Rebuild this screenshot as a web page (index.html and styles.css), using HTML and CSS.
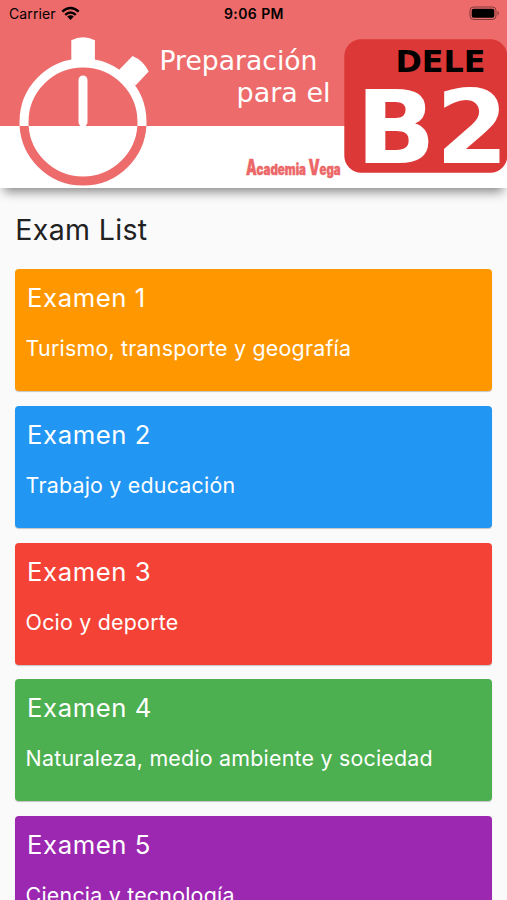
FILE: index.html
```html
<!DOCTYPE html>
<html lang="es">
<head>
<meta charset="utf-8">
<meta name="viewport" content="width=device-width, initial-scale=1">
<title>Preparación para el DELE B2</title>
<link rel="stylesheet" href="styles.css">
</head>
<body>
<header class="banner">
  <svg class="banner-art" viewBox="0 0 507 187" width="507" height="187">
    <rect width="507" height="126" fill="#ed6b6b"/>
    <clipPath id="upper"><rect width="507" height="126"/></clipPath>
    <clipPath id="lower"><rect y="126" width="507" height="61"/></clipPath>
    <circle cx="83" cy="122" r="59" fill="none" stroke="#fff" stroke-width="9" clip-path="url(#upper)"/>
    <circle cx="83" cy="122" r="59" fill="none" stroke="#ed6b6b" stroke-width="9" clip-path="url(#lower)"/>
    <path d="M71.3 40.2Q83 34.3 94.9 40.2V63H71.3Z" fill="#fff"/>
    <path d="M132.5 56Q143.5 60.5 148.7 71.5L135.5 85.5L118 71Z" fill="#fff"/>
    <path d="M83 80V122" stroke="#fff" stroke-width="9" stroke-linecap="round"/>
    <g class="tagline">
      <text x="159.5" y="70.3" textLength="158" lengthAdjust="spacingAndGlyphs">Preparación</text>
      <text x="236.5" y="101.7" textLength="94" lengthAdjust="spacingAndGlyphs">para el</text>
    </g>
    <g class="brand">
      <text class="brand-cap" x="246" y="175.3" textLength="10.8" lengthAdjust="spacingAndGlyphs">A</text>
      <text x="256.5" y="175.3" textLength="49.5" lengthAdjust="spacingAndGlyphs">cademia</text>
      <text class="brand-cap" x="308.5" y="175.3" textLength="11.3" lengthAdjust="spacingAndGlyphs">V</text>
      <text x="319.5" y="175.3" textLength="21" lengthAdjust="spacingAndGlyphs">ega</text>
    </g>
    <rect x="344.3" y="39.3" width="163" height="133.5" rx="17" fill="#dc3837"/>
    <text class="dele" x="395.5" y="72.3" textLength="90" lengthAdjust="spacingAndGlyphs">DELE</text>
    <text class="level" x="356" y="163.3" textLength="152.5" lengthAdjust="spacingAndGlyphs">B2</text>
  </svg>
  <div class="status">
    <span class="carrier">Carrier
      <svg width="19" height="15" viewBox="0 0 19 15"><g fill="none" stroke="#000" stroke-width="2.5"><path d="M1.3 5.7Q9.5 -1.8 17.7 5.7"/><path d="M4.2 8.9Q9.5 4.2 14.8 8.9"/></g><path d="M6.2 10.6Q9.5 7.9 12.8 10.6L9.5 14Z"/></svg>
    </span>
    <span class="clock">9:06 PM</span>
    <svg class="battery" width="31" height="15" viewBox="0 0 31 15"><rect x="1" y="1" width="26" height="12.5" rx="3.6" fill="none" stroke="#000" stroke-opacity=".45"/><rect x="2.7" y="2.7" width="22.6" height="9.1" rx="2"/><path d="M28.6 5Q31 7.2 28.6 9.5Z" fill-opacity=".5"/></svg>
  </div>
</header>
<main>
  <h1>Exam List</h1>
  <section class="exams">
    <article class="card orange"><h2>Examen 1</h2><p>Turismo, transporte y geografía</p></article>
    <article class="card blue"><h2>Examen 2</h2><p>Trabajo y educación</p></article>
    <article class="card red"><h2>Examen 3</h2><p>Ocio y deporte</p></article>
    <article class="card green"><h2>Examen 4</h2><p>Naturaleza, medio ambiente y sociedad</p></article>
    <article class="card purple"><h2>Examen 5</h2><p>Ciencia y tecnología</p></article>
  </section>
</main>
</body>
</html>
```
FILE: styles.css
```css
* { box-sizing: border-box; margin: 0; }
body {
  height: 900px;
  overflow: hidden;
  background: #fafafa;
  font-family: Inter, sans-serif;
}
.banner {
  position: relative;
  height: 187.5px;
  background: #fff;
  box-shadow: 0 8px 10px -4px rgba(0, 0, 0, .45);
}
.banner-art { display: block; }
.tagline { font: 26.5px "DejaVu Sans", sans-serif; fill: #fff; }
.brand {
  font: 900 15px Inter, sans-serif;
  fill: #ec6767;
  stroke: #ec6767;
  stroke-width: .4px;
}
.brand-cap { font-size: 22px; }
.dele { font: bold 31px "DejaVu Sans", sans-serif; }
.level { font: bold 101px "DejaVu Sans", sans-serif; fill: #fff; }
.status {
  position: absolute;
  inset: 0 0 auto;
  height: 27px;
  padding: 0 7px 0 9px;
  display: grid;
  grid-template-columns: 215px 1fr auto;
  align-items: center;
  font-size: 14px;
}
.carrier { display: flex; align-items: center; gap: 5px; letter-spacing: .1px; }
.clock { font-weight: 600; letter-spacing: .4px; }
main { padding: 23.5px 15px 0 15.3px; }
h1 {
  height: 58px;
  line-height: 38px;
  font-size: 28.5px;
  font-weight: 400;
  letter-spacing: .35px;
  color: #212121;
}
.exams { display: grid; gap: 14.8px; }
.card {
  height: 122px;
  padding: 12px 10.3px;
  border-radius: 4px;
  color: #fff;
  box-shadow: 0 1px 1px rgba(0, 0, 0, .22);
}
.card h2 {
  padding-left: 1.5px;
  line-height: 34px;
  font-size: 25.7px;
  font-weight: 400;
  letter-spacing: .55px;
}
.card p {
  margin-top: 18px;
  line-height: 30px;
  font-size: 21.4px;
  letter-spacing: .22px;
}
.orange { background: #ff9800; }
.blue { background: #2196f3; }
.red { background: #f44336; }
.green { background: #4caf50; }
.purple { background: #9c27b0; }
```
